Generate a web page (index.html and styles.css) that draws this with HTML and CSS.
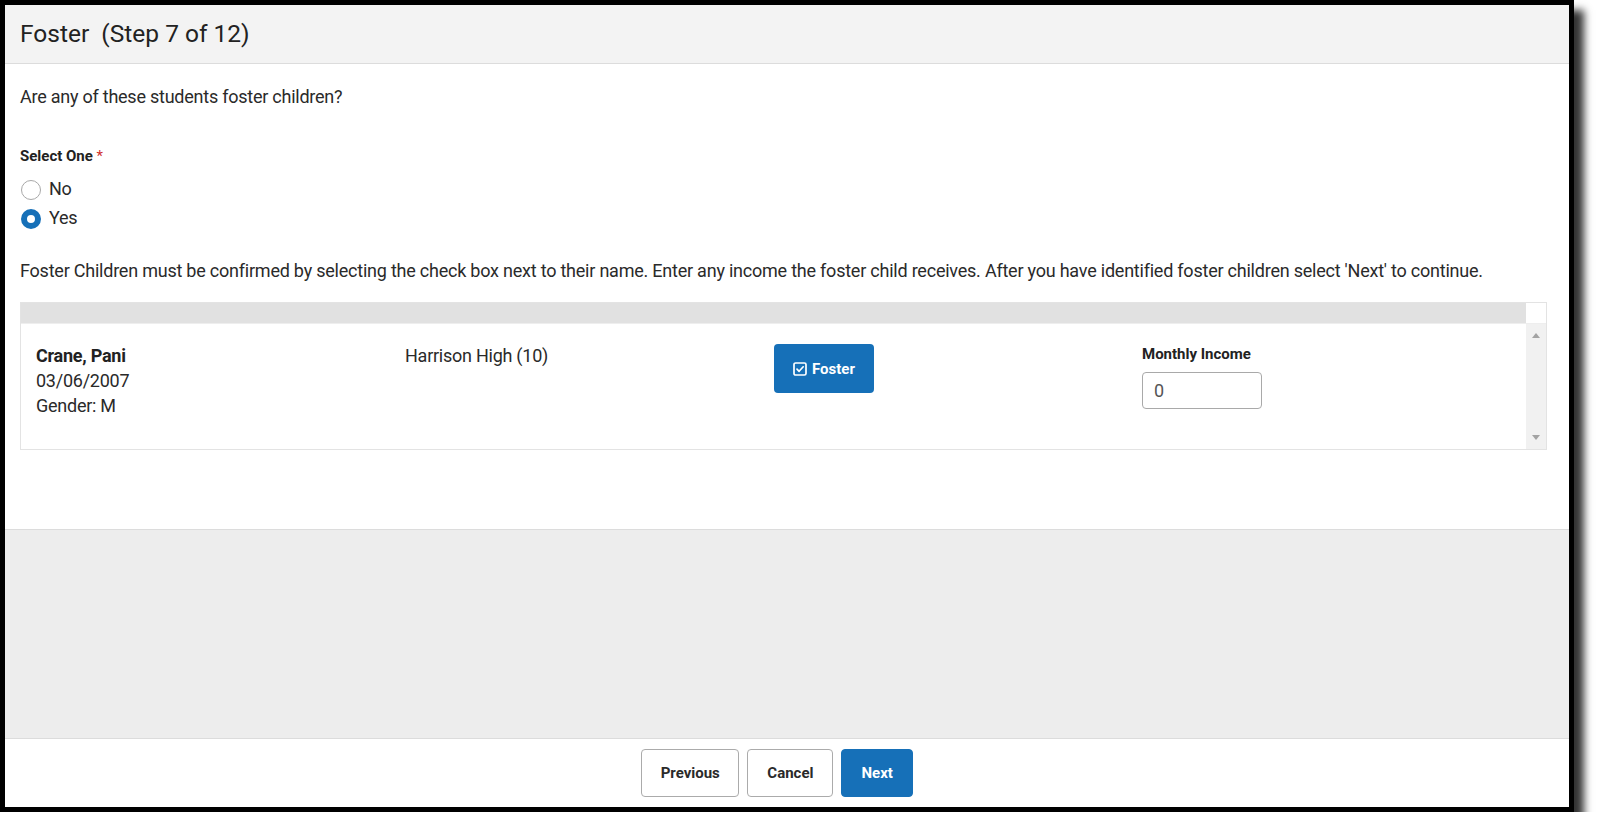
FILE: index.html
```html
<!DOCTYPE html>
<html lang="en">
<head>
<meta charset="utf-8">
<title>Foster (Step 7 of 12)</title>
<link rel="stylesheet" href="styles.css">
</head>
<body>
<div class="frame">
  <div class="header">
    <h1 class="title">Foster&nbsp;&nbsp;(Step 7 of 12)</h1>
  </div>
  <div class="content">
    <p class="question">Are any of these students foster children?</p>
    <div class="field-label">Select One <span class="req">*</span></div>
    <div class="radios">
      <label class="radio-row"><span class="radio"></span><span class="radio-text">No</span></label>
      <label class="radio-row"><span class="radio checked"></span><span class="radio-text">Yes</span></label>
    </div>
    <p class="instructions">Foster Children must be confirmed by selecting the check box next to their name. Enter any income the foster child receives. After you have identified foster children select 'Next' to continue.</p>
    <div class="table">
      <div class="table-head">
        <div class="head-band"></div>
        <div class="head-corner"></div>
      </div>
      <div class="table-body">
        <div class="row">
          <div class="cell student">
            <div class="name">Crane, Pani</div>
            <div>03/06/2007</div>
            <div>Gender: M</div>
          </div>
          <div class="cell school">Harrison High (10)</div>
          <div class="cell action">
            <button class="btn-foster" type="button">
              <svg class="check-icon" width="14" height="14" viewBox="0 0 14 14" aria-hidden="true">
                <rect x="1" y="1" width="12" height="12" rx="1.6" fill="none" stroke="#fff" stroke-width="1.7"/>
                <path d="M4 7.2 L6.1 9.3 L10.2 4.8" fill="none" stroke="#fff" stroke-width="1.7" stroke-linecap="round" stroke-linejoin="round"/>
              </svg>
              <span>Foster</span>
            </button>
          </div>
          <div class="cell income">
            <div class="income-label">Monthly Income</div>
            <input class="income-input" type="text" value="0">
          </div>
        </div>
        <div class="scrollbar">
          <span class="arrow up"></span>
          <span class="arrow down"></span>
        </div>
      </div>
    </div>
  </div>
  <div class="filler"></div>
  <div class="footer">
    <button class="btn btn-prev" type="button">Previous</button>
    <button class="btn" type="button">Cancel</button>
    <button class="btn btn-primary" type="button">Next</button>
  </div>
</div>
</body>
</html>
```
FILE: styles.css
```css
* { box-sizing: border-box; }

html, body {
  margin: 0;
  padding: 0;
  background: #ffffff;
}

body {
  font-family: Roboto, "Liberation Sans", Arial, sans-serif;
  color: #333333;
}

.frame {
  width: 1574px;
  height: 812px;
  border: 5px solid #000000;
  box-shadow: 10px 10px 8px rgba(0, 0, 0, 0.8);
  display: flex;
  flex-direction: column;
  background: #ffffff;
}

.header {
  height: 59px;
  flex: none;
  background: #f3f3f3;
  border-bottom: 1px solid #dcdcdc;
  padding-left: 15px;
  display: flex;
  align-items: center;
}

.title {
  margin: 0;
  font-size: 24.5px;
  font-weight: 400;
  color: #222222;
  line-height: 30px;
  padding-top: 1px;
  padding-bottom: 1px;
}

.content {
  height: 466px;
  flex: none;
  padding: 21px 22px 0 15px;
  border-bottom: 1px solid #dcdcdc;
}

.question {
  margin: 0;
  font-size: 18px;
  line-height: 24px;
  letter-spacing: -0.24px;
  color: #2a2a2a;
}

.field-label {
  margin-top: 37px;
  font-size: 15px;
  font-weight: 700;
  line-height: 20px;
  color: #222222;
}

.req {
  color: #d0312d;
  font-weight: 400;
}

.radios {
  margin-top: 9px;
  display: flex;
  flex-direction: column;
}

.radio-row {
  height: 29px;
  display: flex;
  align-items: center;
  gap: 8px;
  padding-left: 1px;
}

.radio {
  width: 20px;
  height: 20px;
  border-radius: 50%;
  border: 1px solid #a8a8a8;
  background: #ffffff;
  flex: none;
}

.radio.checked {
  border: 6px solid #1670b8;
}

.radio-text {
  font-size: 18px;
  line-height: 24px;
  letter-spacing: -0.24px;
  color: #2a2a2a;
  padding-bottom: 2px;
}

.instructions {
  margin: 26px 0 0;
  font-size: 18px;
  line-height: 24px;
  letter-spacing: -0.225px;
  color: #2a2a2a;
}

.table {
  margin-top: 19px;
  border: 1px solid #e3e3e3;
}

.table-head {
  display: flex;
  height: 21px;
  border-bottom: 1px solid #eeeeee;
}

.head-band {
  flex: 1;
  background: #e1e1e1;
}

.head-corner {
  width: 20px;
  background: #ffffff;
}

.table-body {
  display: flex;
  height: 125px;
}

.row {
  flex: 1;
  display: grid;
  grid-template-columns: 369px 369px 368px 1fr;
  padding: 19px 0 0 15px;
}

.cell {
  font-size: 18px;
  line-height: 25px;
  letter-spacing: -0.25px;
  color: #2a2a2a;
}

.name {
  font-weight: 700;
  color: #222222;
}

.btn-foster {
  width: 100px;
  height: 49px;
  margin-top: 1px;
  border: none;
  border-radius: 4px;
  background: #1670b8;
  color: #ffffff;
  font-family: Roboto, "Liberation Sans", Arial, sans-serif;
  font-size: 15px;
  font-weight: 700;
  letter-spacing: 0;
  display: flex;
  align-items: center;
  justify-content: center;
  gap: 5px;
  padding: 0;
}

.check-icon {
  display: block;
}

.income-label {
  margin-top: 1px;
  font-size: 15px;
  font-weight: 700;
  line-height: 20px;
  letter-spacing: 0;
  color: #222222;
}

.income-input {
  display: block;
  margin-top: 8px;
  width: 120px;
  height: 37px;
  border: 1px solid #a9a9a9;
  border-radius: 4px;
  padding: 0 11px;
  font-family: Roboto, "Liberation Sans", Arial, sans-serif;
  font-size: 18px;
  color: #555555;
  background: #ffffff;
}

.scrollbar {
  width: 20px;
  background: #f1f1f1;
  display: flex;
  flex-direction: column;
  justify-content: space-between;
  align-items: center;
  padding: 9px 0 9px;
}

.arrow {
  width: 0;
  height: 0;
  border-left: 4px solid transparent;
  border-right: 4px solid transparent;
}

.arrow.up {
  border-bottom: 5px solid #a3a3a3;
}

.arrow.down {
  border-top: 5px solid #a3a3a3;
}

.filler {
  flex: 1;
  background: #ededed;
}

.footer {
  height: 69px;
  flex: none;
  border-top: 1px solid #dcdcdc;
  display: flex;
  justify-content: center;
  align-items: flex-start;
  gap: 8px;
  padding: 10px 20px 0 0;
  background: #ffffff;
}

.btn {
  height: 48px;
  padding: 0 19px;
  border: 1px solid #ababab;
  border-radius: 4px;
  background: #ffffff;
  color: #2a2a2a;
  font-family: Roboto, "Liberation Sans", Arial, sans-serif;
  font-size: 15px;
  font-weight: 700;
}

.btn-prev {
  padding: 0 18.5px;
}

.btn-primary {
  background: #1670b8;
  border-color: #1670b8;
  color: #ffffff;
  padding: 0 19px;
}
```
